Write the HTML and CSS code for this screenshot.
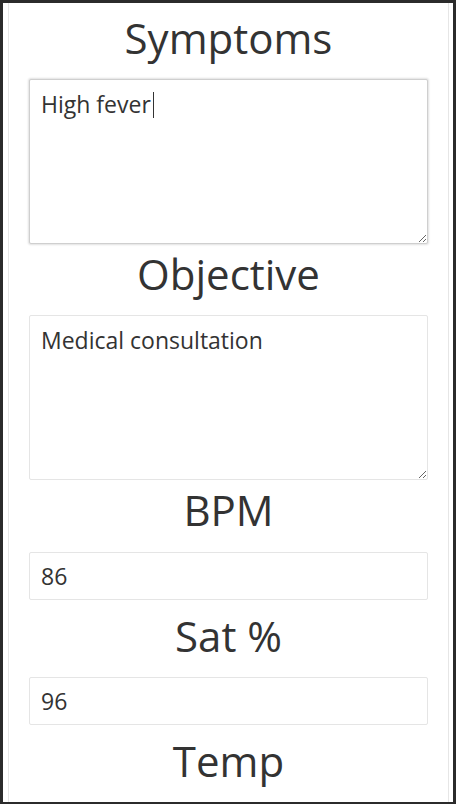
FILE: index.html
```html
<!DOCTYPE html>
<html>
<head>
<meta charset="utf-8">
<link rel="stylesheet" href="styles.css">
</head>
<body>
<div class="frame">
  <div class="panel">
    <h1 class="label first">Symptoms</h1>
    <div class="area-wrap">
      <textarea class="field area focused">High fever</textarea>
      <span class="caret"></span>
    </div>
    <h1 class="label">Objective</h1>
    <textarea class="field area">Medical consultation</textarea>
    <h1 class="label tall">BPM</h1>
    <input class="field line" type="text" value="86">
    <h1 class="label">Sat %</h1>
    <input class="field line" type="text" value="96">
    <h1 class="label">Temp</h1>
    <input class="field line" type="text" value="">
  </div>
</div>
</body>
</html>
```

FILE: styles.css
```css
html, body {
  margin: 0;
  padding: 0;
  background: #2b2b2b;
  height: 804px;
  overflow: hidden;
}
.frame {
  box-sizing: border-box;
  width: 456px;
  height: 804px;
  border-style: solid;
  border-color: #2b2b2b;
  border-width: 3px 3px 2px 3px;
  background: #fff;
  overflow: hidden;
}
.panel {
  box-sizing: border-box;
  margin-left: 5px;
  width: 441px;
  min-height: 900px;
  border-left: 1px solid #e6e6e6;
  border-right: 1px solid #e6e6e6;
  padding: 5px 20px 0;
  display: flex;
  flex-direction: column;
  font-family: "Open Sans", "Noto Sans", sans-serif;
  color: #333;
}
.label {
  margin: 0;
  text-align: center;
  font-weight: 400;
  font-size: 42px;
  line-height: 60px;
  padding-bottom: 11px;
  color: #333;
}
.label.tall {
  padding-bottom: 12px;
}
.field {
  box-sizing: border-box;
  width: 399px;
  margin: 0;
  font-family: "Open Sans", "Noto Sans", sans-serif;
  font-size: 23px;
  color: #333;
  background: #fff;
  border: 1px solid #e5e5e5;
  border-radius: 2px;
  padding: 6px 11px;
  outline: none;
}
.area-wrap {
  position: relative;
  width: 399px;
}
.area {
  height: 165px;
  display: block;
  resize: vertical;
  padding-top: 8px;
}
.focused {
  border-color: #cfcfcf;
  box-shadow: 0 0 2px 1px rgba(0,0,0,0.12);
}
.caret {
  position: absolute;
  left: 124px;
  top: 13px;
  width: 1px;
  height: 26px;
  background: #333;
}
.line {
  height: 48px;
  display: block;
  margin-bottom: 6px;
}
```
